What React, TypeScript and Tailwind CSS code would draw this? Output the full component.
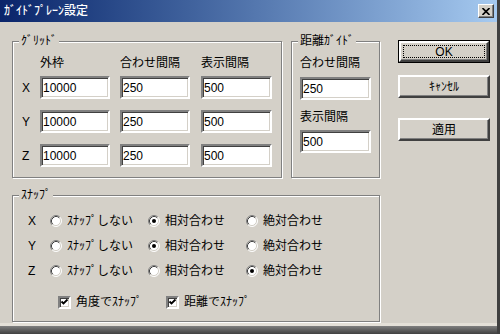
import type { ReactNode } from "react";

const sunken =
  "border-2 border-t-[#808080] border-l-[#808080] border-b-white border-r-white shadow-[inset_1px_1px_0_#404040,inset_-1px_-1px_0_#d4d0c8]";

function Field({ value, w = "w-[70px]" }: { value: string; w?: string }) {
  return (
    <div className={`${w} h-[23px] ${sunken} flex items-center bg-white pl-[1px] text-[12px] leading-none text-black`}>
      {value}
    </div>
  );
}

function Group({ label, className, children }: { label: string; className: string; children: ReactNode }) {
  return (
    <div className={`relative border border-[#808080] shadow-[inset_1px_1px_0_#fff,1px_1px_0_#fff] ${className}`}>
      <span className="absolute left-[6px] top-[-8px] bg-[#d4d0c8] px-[2px] text-[12px] leading-[14px]">{label}</span>
      {children}
    </div>
  );
}

function Button({ label, isDefault }: { label: string; isDefault?: boolean }) {
  const inner = (
    <div className="relative flex h-full w-full items-center justify-center border-2 border-t-white border-l-white border-b-[#404040] border-r-[#404040] shadow-[inset_-1px_-1px_0_#808080] text-[12px] leading-none">
      {isDefault && <span className="absolute inset-[2px] border border-dotted border-black" />}
      {label}
    </div>
  );
  return isDefault ? (
    <div className="h-[23px] w-[92px] border border-black">{inner}</div>
  ) : (
    <div className="h-[23px] w-[92px]">{inner}</div>
  );
}

function Radio({ on, label }: { on?: boolean; label: string }) {
  return (
    <div className="flex w-[98px] items-center gap-[5px]">
      <svg width="12" height="12" viewBox="0 0 12 12">
        <circle cx="6" cy="6" r="5" fill="#fff" />
        <path d="M9.89 2.11 A5.5 5.5 0 0 0 2.11 9.89" stroke="#808080" fill="none" />
        <path d="M9.18 2.82 A4.5 4.5 0 0 0 2.82 9.18" stroke="#404040" fill="none" />
        <path d="M2.11 9.89 A5.5 5.5 0 0 0 9.89 2.11" stroke="#fff" fill="none" />
        <path d="M2.82 9.18 A4.5 4.5 0 0 0 9.18 2.82" stroke="#d4d0c8" fill="none" />
        {on && <circle cx="6" cy="6" r="2" fill="#000" />}
      </svg>
      <span className="text-[12px] leading-none">{label}</span>
    </div>
  );
}

function Check({ label }: { label: string }) {
  return (
    <div className="flex w-[108px] items-center gap-[5px]">
      <div className={`h-[13px] w-[13px] ${sunken} bg-white`}>
        <svg width="9" height="9" viewBox="0 0 9 9">
          <path d="M1.5 3.5 L3.5 5.5 L7.5 1.5" stroke="#000" strokeWidth="1.8" fill="none" />
        </svg>
      </div>
      <span className="text-[12px] leading-none">{label}</span>
    </div>
  );
}

const gridRows = [
  { axis: "X", v: ["10000", "250", "500"] },
  { axis: "Y", v: ["10000", "250", "500"] },
  { axis: "Z", v: ["10000", "250", "500"] },
];

const snapRows = [
  { axis: "X", sel: 1 },
  { axis: "Y", sel: 1 },
  { axis: "Z", sel: 2 },
];

export default function App() {
  return (
    <div className="flex h-[334px] w-[500px] flex-col overflow-hidden border-r-[3px] border-r-[#404040] bg-[#d4d0c8] font-['Liberation_Sans','Noto_Sans_CJK_JP',sans-serif] text-black">
      {/* title bar */}
      <div className="flex h-[22px] shrink-0 items-center justify-between bg-linear-to-r from-[#0a246a] to-[#a6caf0] pl-[4px] pr-[3px]">
        <span className="text-[12px] font-medium leading-none text-white">ｶﾞｲﾄﾞﾌﾟﾚｰﾝ設定</span>
        <div className="flex h-[14px] w-[16px] items-center justify-center border border-t-white border-l-white border-b-[#404040] border-r-[#404040] bg-[#d4d0c8] shadow-[inset_-1px_-1px_0_#808080]">
          <svg width="8" height="7" viewBox="0 0 8 7">
            <path d="M0.5 0 L7.5 7 M7.5 0 L0.5 7" stroke="#000" strokeWidth="1.6" />
          </svg>
        </div>
      </div>

      <div className="flex flex-1 pl-[12px] pt-[19px]">
        <div className="flex w-[368px] flex-col">
          <div className="flex gap-[9px]">
            <Group label="ｸﾞﾘｯﾄﾞ" className="h-[137px] w-[270px] pl-[9px] pt-[14px]">
              <div className="flex h-[14px] items-center pl-[18px] text-[12px] leading-none">
                <span className="w-[80px]">外枠</span>
                <span className="w-[81px]">合わせ間隔</span>
                <span>表示間隔</span>
              </div>
              <div className="mt-[6px] flex flex-col gap-[11px]">
                {gridRows.map((r) => (
                  <div key={r.axis} className="flex items-center">
                    <span className="w-[18px] text-[12px] leading-none">{r.axis}</span>
                    <Field value={r.v[0]} />
                    <div className="w-[10px]" />
                    <Field value={r.v[1]} />
                    <div className="w-[11px]" />
                    <Field value={r.v[2]} w="w-[71px]" />
                  </div>
                ))}
              </div>
            </Group>
            <Group label="距離ｶﾞｲﾄﾞ" className="h-[137px] w-[89px] pl-[8px] pt-[14px]">
              <div className="flex h-[14px] items-center text-[12px] leading-none">合わせ間隔</div>
              <div className="mt-[7px]">
                <Field value="250" w="w-[71px]" />
              </div>
              <div className="mt-[10px] flex h-[14px] items-center text-[12px] leading-none">表示間隔</div>
              <div className="mt-[6px]">
                <Field value="500" w="w-[71px]" />
              </div>
            </Group>
          </div>

          <Group label="ｽﾅｯﾌﾟ" className="mt-[17px] h-[127px] w-[368px] pl-[15px] pt-[15px]">
            <div className="flex flex-col gap-[5px]">
              {snapRows.map((r) => (
                <div key={r.axis} className="flex h-[20px] items-center">
                  <span className="w-[22px] text-[12px] leading-none">{r.axis}</span>
                  <Radio on={r.sel === 0} label="ｽﾅｯﾌﾟしない" />
                  <Radio on={r.sel === 1} label="相対合わせ" />
                  <Radio on={r.sel === 2} label="絶対合わせ" />
                </div>
              ))}
            </div>
            <div className="mt-[11px] flex h-[20px] items-center pl-[30px]">
              <Check label="角度でｽﾅｯﾌﾟ" />
              <Check label="距離でｽﾅｯﾌﾟ" />
            </div>
          </Group>
        </div>

        <div className="ml-[18px] flex flex-col">
          <div className="-mt-[1px]">
            <Button label="OK" isDefault />
          </div>
          <div className="mt-[12px]">
            <Button label="ｷｬﾝｾﾙ" />
          </div>
          <div className="mt-[20px]">
            <Button label="適用" />
          </div>
        </div>
      </div>

      <div className="h-[3px] shrink-0 bg-[#e4e0d8]" />
      <div className="h-[8px] shrink-0 bg-linear-to-b from-[#808080] to-[#404040]" />
    </div>
  );
}
